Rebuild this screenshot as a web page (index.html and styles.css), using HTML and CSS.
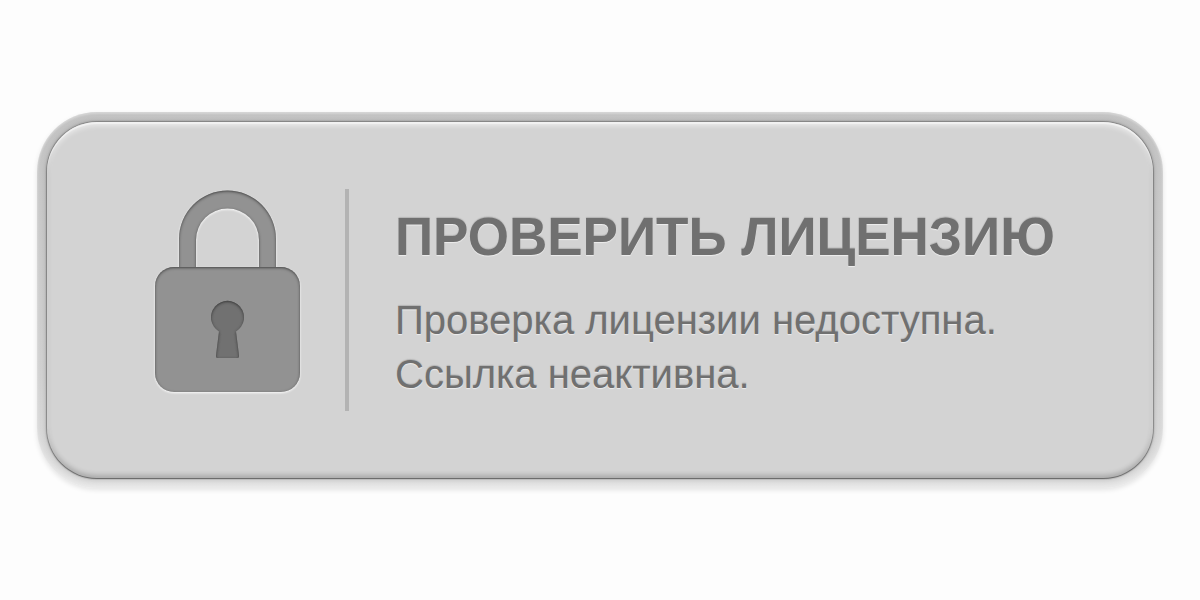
FILE: index.html
```html
<!DOCTYPE html>
<html lang="ru">
<head>
  <meta charset="UTF-8">
  <title>Проверить лицензию</title>
  <link rel="stylesheet" href="styles.css">
</head>
<body>

<button class="license" type="button" disabled>
  <span class="face">
    <svg class="lock" viewBox="0 0 146 204" aria-hidden="true">
      <defs>
        <filter id="inset" x="-10%" y="-10%" width="120%" height="120%">
          <feComponentTransfer in="SourceAlpha" result="hole">
            <feFuncA type="linear" slope="-1" intercept="1"/>
          </feComponentTransfer>
          <feGaussianBlur in="hole" stdDeviation="1.8"/>
          <feOffset dy="1"/>
          <feComposite in2="SourceAlpha" operator="in" result="edge"/>
          <feFlood flood-color="#222"/>
          <feComposite in2="edge" operator="in" result="shade"/>
          <feMerge>
            <feMergeNode in="SourceGraphic"/>
            <feMergeNode in="shade"/>
          </feMerge>
        </filter>
      </defs>
      <path class="lock-metal" filter="url(#inset)" d="M25 84V50a48.5 48.5 0 0 1 97 0v34h-17V51a31.500 31.500 0 0 0-63 0v33z"/>
      <rect class="lock-metal" filter="url(#inset)" x="1" y="78" width="145" height="125" rx="19"/>
      <path class="lock-hole" filter="url(#inset)" d="M65 142.500a16.500 16.500 0 1 1 17 0l3 24q.4 2.500-2 2.500H64q-2.400 0-2-2.500z"/>
    </svg>
    <span class="text">
      <span class="title">ПРОВЕРИТЬ ЛИЦЕНЗИЮ</span>
      <span class="note">Проверка лицензии недоступна.<br>Ссылка неактивна.</span>
    </span>
  </span>
</button>

</body>
</html>
```

FILE: styles.css
```css
body {
  margin: 0;
  padding: 112px 37px;
  background: #fdfdfd;
}

.license {
  display: block;
  box-sizing: border-box;
  width: 100%;
  padding: 10px;
  border: 0;
  border-radius: 60px;
  background: linear-gradient(#c2c2c2, #c8c8c8 30%, #d0d0d0 70%, #dedede);
  box-shadow:
    0 2px 5px rgba(0, 0, 0, 0.1),
    inset 0 2px 2px rgba(255, 255, 255, 0.3),
    inset 0 -3px 4px rgba(255, 255, 255, 0.4);
  color: #707070;
  font-family: 'Liberation Sans', Arial, sans-serif;
  text-align: left;
}

.face {
  display: flex;
  align-items: flex-start;
  padding: 67px 50px 67px 107px;
  border-radius: 50px;
  background: #d3d3d3;
  box-shadow:
    0 0 1px 1px rgba(90, 90, 90, 0.5),
    0 1px 1px rgba(70, 70, 70, 0.6),
    0 0 5px rgba(0, 0, 0, 0.25),
    inset 0 2px 1px rgba(255, 255, 255, 0.5),
    inset 0 4px 5px rgba(255, 255, 255, 0.5),
    inset 0 -3px 5px rgba(0, 0, 0, 0.2);
}

.lock {
  flex: none;
  width: 146px;
  height: 204px;
  filter: drop-shadow(0 1px 1px rgba(255, 255, 255, 0.9));
}

.lock-metal {
  fill: #929292;
}

.lock-hole {
  fill: #717171;
}

.text {
  display: flex;
  flex-direction: column;
  gap: 24px;
  box-sizing: border-box;
  min-height: 222px;
  margin-left: 45px;
  padding: 16px 0 0 46px;
  border-left: 4px solid #b3b3b3;
  text-shadow: 0 -1px 1px rgba(60, 60, 60, 0.2), 0 1px 1px rgba(255, 255, 255, 0.6);
}

.title {
  font-size: 53px;
  font-weight: bold;
  line-height: 64px;
  white-space: nowrap;
}

.note {
  font-size: 40px;
  line-height: 54px;
}
```
